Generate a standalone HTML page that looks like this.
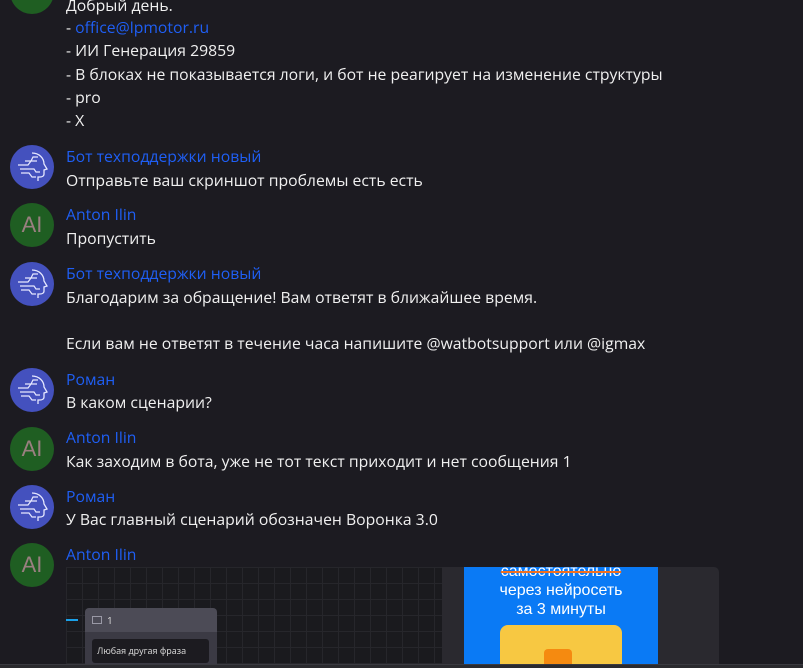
<!DOCTYPE html>
<html><head><meta charset="utf-8"><style>
*{margin:0;padding:0;box-sizing:border-box}
body{width:803px;height:668px;overflow:hidden;background:#1c1b21;font-family:"Open Sans","Liberation Sans","DejaVu Sans",sans-serif;font-size:15.75px;color:#f0f0f0;position:relative}
.t{position:absolute;left:66px;white-space:nowrap;line-height:20px}
.n{color:#1f5ff5}
.av{position:absolute;left:10px;width:44px;height:44px;border-radius:50%}
.ai{background:#1f5e22;color:#9a7f80;font-size:22px;text-align:center;line-height:44px;font-family:"Liberation Sans",sans-serif}
.bot{background:#4451be}
</style></head><body>
<div class="av ai" style="top:-30px"></div>
<div class="t" style="top:-5px">Добрый день.</div>
<div class="t" style="top:17px">- <span class="n">office@lpmotor.ru</span></div>
<div class="t" style="top:40px">- ИИ Генерация 29859</div>
<div class="t" style="top:64px">- В блоках не показывается логи, и бот не реагирует на изменение структуры</div>
<div class="t" style="top:87px">- pro</div>
<div class="t" style="top:110px">- X</div>

<svg width="0" height="0" style="position:absolute"><defs><g id="b"><path d="M22 8c7 0 12 5 12 11l3 5-3 1v4c0 2-2 3-4 3h-2v4" fill="none" stroke="#e6e8ff" stroke-width="1.3"/><path d="M8 20h10l3-4h6M10 24h14l2 3h4M11 28h8l3 4h4M15 16h6l2-4h5M13 20h-4" fill="none" stroke="#e6e8ff" stroke-width="1.2"/></g></defs></svg>

<div class="av bot" style="top:145px"><svg width="44" height="44"><use href="#b"/></svg></div>
<div class="t n" style="top:146px">Бот техподдержки новый</div>
<div class="t" style="top:170px">Отправьте ваш скриншот проблемы есть есть</div>

<div class="av ai" style="top:203px">AI</div>
<div class="t n" style="top:204px">Anton Ilin</div>
<div class="t" style="top:228px">Пропустить</div>

<div class="av bot" style="top:262px"><svg width="44" height="44"><use href="#b"/></svg></div>
<div class="t n" style="top:263px">Бот техподдержки новый</div>
<div class="t" style="top:287px">Благодарим за обращение! Вам ответят в ближайшее время.</div>
<div class="t" style="top:333px">Если вам не ответят в течение часа напишите @watbotsupport или @igmax</div>

<div class="av bot" style="top:368px"><svg width="44" height="44"><use href="#b"/></svg></div>
<div class="t n" style="top:369px">Роман</div>
<div class="t" style="top:392px">В каком сценарии?</div>

<div class="av ai" style="top:427px">AI</div>
<div class="t n" style="top:427px">Anton Ilin</div>
<div class="t" style="top:451px">Как заходим в бота, уже не тот текст приходит и нет сообщения 1</div>

<div class="av bot" style="top:485px"><svg width="44" height="44"><use href="#b"/></svg></div>
<div class="t n" style="top:486px">Роман</div>
<div class="t" style="top:509px">У Вас главный сценарий обозначен Воронка 3.0</div>

<div class="av ai" style="top:543px">AI</div>
<div class="t n" style="top:544px">Anton Ilin</div>

<div style="position:absolute;left:66px;top:567px;width:376px;height:97px;background-color:#1a1a1e;background-image:linear-gradient(#26262b 1px,transparent 1px),linear-gradient(90deg,#26262b 1px,transparent 1px);background-size:16px 16px"></div>
<div style="position:absolute;left:66px;top:619px;width:12px;height:2px;background:#1aa0e8"></div>
<div style="position:absolute;left:85px;top:608px;width:132px;height:60px;background:#4c4b56;border-radius:4px 4px 0 0"></div>
<div style="position:absolute;left:85px;top:632px;width:132px;height:36px;background:#3b3a44"></div>
<div style="position:absolute;left:92px;top:616px;width:10px;height:8px;border:1px solid #9a99a6"></div>
<div style="position:absolute;left:107px;top:613px;font-size:10px;color:#ddd">1</div>
<div style="position:absolute;left:92px;top:639px;width:117px;height:24px;background:#1c1b20;border-radius:3px;font-size:9px;color:#ddd;line-height:24px;padding-left:5px">Любая другая фраза</div>

<div style="position:absolute;left:442px;top:567px;width:277px;height:97px;background:#2a292f;border-radius:0 5px 0 0"></div>
<div style="position:absolute;left:464px;top:567px;width:194px;height:97px;background:#0a7af5;overflow:hidden;text-align:center;color:#fff;font-size:16px;line-height:19px;font-family:'Liberation Sans',sans-serif">
<div style="margin-top:-5px;text-decoration:line-through;text-decoration-color:#f07020;text-decoration-thickness:2px">самостоятельно</div>
<div>через нейросеть</div><div>за 3 минуты</div>
<div style="position:absolute;left:36px;top:58px;width:122px;height:50px;background:#f7c842;border-radius:8px"></div>
<div style="position:absolute;left:80px;top:82px;width:28px;height:22px;background:#f58a10;border-radius:4px"></div>
</div>
<div style="position:absolute;left:0;top:664px;width:803px;height:4px;background:#2a2a2e;border-top:1px solid #3a3a40"></div>
</body></html>
